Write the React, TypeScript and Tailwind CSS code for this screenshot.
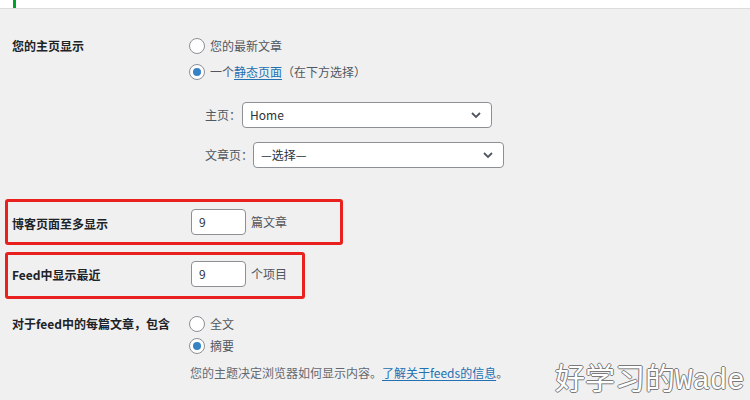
import React from "react";

const F = '"Microsoft YaHei","Noto Sans CJK SC","Noto Sans",sans-serif';

function Radio({ checked, children }: { checked?: boolean; children: React.ReactNode }) {
  return (
    <div className="flex items-center h-[26px]">
      <span className="w-[16px] h-[16px] rounded-full border border-[#8c8f94] bg-white flex items-center justify-center shrink-0 ml-[-1px]">
        {checked && <span className="w-[8px] h-[8px] rounded-full bg-[#3582c4]" />}
      </span>
      <span className="ml-[5px] text-[12px] text-[#50575e]">{children}</span>
    </div>
  );
}

function Select({ value, width }: { value: string; width: number }) {
  return (
    <div
      className="h-[26px] rounded-[4px] border border-[#8c8f94] bg-white flex items-center justify-between pl-[7px] pr-[9px]"
      style={{ width }}
    >
      <span className="text-[12px] text-[#2c3338]">{value}</span>
      <svg width="12" height="8" viewBox="0 0 12 8">
        <path d="M2 2 L6 6 L10 2" fill="none" stroke="#50575e" strokeWidth="1.8" />
      </svg>
    </div>
  );
}

function NumInput() {
  return (
    <div className="w-[55px] h-[26px] rounded-[4px] border border-[#8c8f94] bg-white flex items-center pl-[7px] text-[12px] text-[#2c3338]">
      9
    </div>
  );
}

export default function App() {
  return (
    <div className="relative w-[750px] h-[400px] bg-[#f0f0f1] overflow-hidden" style={{ fontFamily: F }}>
      <div className="h-[9px] bg-white border-b border-[#dcdcde] flex">
        <div className="ml-[13px] w-[3px] h-full bg-[#00a32a]" />
      </div>

      <div className="pl-[12px]">
        {/* front page displays */}
        <div className="flex mt-[24px]">
          <div className="w-[178px] h-[26px] flex items-center text-[12px] font-bold text-[#1d2327]">您的主页显示</div>
          <div className="flex flex-col">
            <Radio>您的最新文章</Radio>
            <Radio checked>
              一个<a className="text-[#2271b1] underline underline-offset-2">静态页面</a>（在下方选择）
            </Radio>
            <div className="flex items-center mt-[17px] ml-[15px]">
              <span className="text-[12px] text-[#50575e] mr-[1px]">主页：</span>
              <Select value="Home" width={250} />
            </div>
            <div className="flex items-center mt-[14px] ml-[15px]">
              <span className="text-[12px] text-[#50575e]">文章页：</span>
              <Select value="—选择—" width={251} />
            </div>
          </div>
        </div>

        {/* blog pages show at most */}
        <div className="flex items-center mt-[41px] h-[26px]">
          <div className="w-[179px] text-[12px] font-bold text-[#1d2327] pt-[3px]">博客页面至多显示</div>
          <NumInput />
          <span className="ml-[5px] text-[12px] text-[#50575e]">篇文章</span>
        </div>

        <div className="flex items-center mt-[26px] h-[26px]">
          <div className="w-[179px] text-[12px] font-bold text-[#1d2327] pt-[2px]">Feed中显示最近</div>
          <NumInput />
          <span className="ml-[5px] text-[12px] text-[#50575e]">个项目</span>
        </div>

        <div className="flex mt-[24px]">
          <div className="w-[178px] h-[26px] flex items-center text-[12px] font-bold text-[#1d2327]">对于feed中的每篇文章，包含</div>
          <div className="flex flex-col">
            <Radio>全文</Radio>
            <div className="-mt-[4px]">
              <Radio checked>摘要</Radio>
            </div>
            <div className="text-[12px] text-[#646970] mt-[1px] leading-[26px]">
              您的主题决定浏览器如何显示内容。<a className="text-[#2271b1] underline underline-offset-2">了解关于feeds的信息</a>。
            </div>
          </div>
        </div>
      </div>

      {/* annotation boxes */}
      <div className="absolute left-[5px] top-[199px] w-[338px] h-[46px] border-[3px] border-[#e8201e] rounded-[3px]" />
      <div className="absolute left-[5px] top-[252px] w-[300px] h-[47px] border-[3px] border-[#e8201e] rounded-[3px]" />

      {/* watermark */}
      <div
        className="absolute left-[555px] top-[358px] text-[30px] leading-[36px] text-white whitespace-nowrap [text-shadow:1px_0_#7a7a7a,-1px_0_#7a7a7a,0_1px_#7a7a7a,0_-1px_#7a7a7a]"
        style={{ fontFamily: '"Noto Sans CJK SC",sans-serif' }}
      >
        好学习的<span style={{ fontFamily: '"Liberation Mono",monospace', fontSize: 29 }}>Wade</span>
      </div>
    </div>
  );
}
